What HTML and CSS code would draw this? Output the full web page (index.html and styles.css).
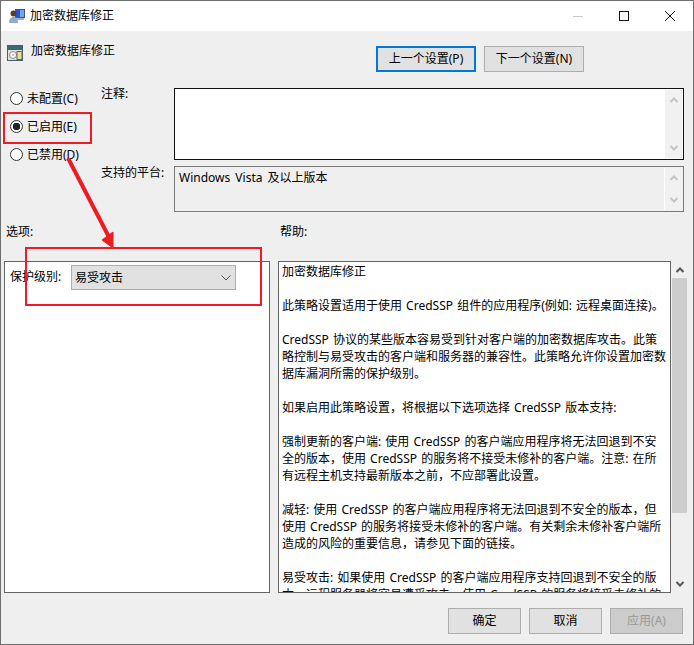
FILE: index.html
```html
<!DOCTYPE html>
<html lang="zh-CN">
<head>
<meta charset="utf-8">
<title>加密数据库修正</title>
<link rel="stylesheet" href="styles.css">
</head>
<body>
<div class="window">
  <div class="titlebar">
    <svg class="title-icon" width="16" height="16" viewBox="0 0 16 16">
      <rect x="6" y="1" width="10" height="9" fill="#44566e"/>
      <rect x="7" y="2" width="8" height="7" fill="#1f57d8"/>
      <path d="M11 2h4v7h-4z" fill="#6fa6ee"/>
      <rect x="8" y="10" width="7" height="2" fill="#a9b0ba"/>
      <circle cx="4.500" cy="5.500" r="3" fill="#5a3c28"/>
      <path d="M0 15c0-4 2-6 4.500-6S9 11 9 15z" fill="#8fa9d0"/>
    </svg>
    <span class="title-text">加密数据库修正</span>
    <div class="caption">
      <svg width="46" height="30" viewBox="0 0 46 30"><path d="M18 15.500h10" stroke="#c8c8c8" fill="none"/></svg>
      <svg width="46" height="30" viewBox="0 0 46 30"><rect x="18.500" y="10.500" width="9" height="9" stroke="#111" fill="none"/></svg>
      <svg width="46" height="30" viewBox="0 0 46 30"><path d="M18 10l10 10M28 10l-10 10" stroke="#111" fill="none"/></svg>
    </div>
  </div>
  <div class="body">
    <div class="head">
      <svg class="policy-icon" width="16" height="16" viewBox="0 0 16 16">
        <rect x="0.500" y="0.500" width="15" height="15" fill="#dfe3d6" stroke="#44606a"/>
        <rect x="1" y="1" width="14" height="4" fill="#3a6a72"/>
        <circle cx="6" cy="10" r="3.500" fill="#f4f4f4" stroke="#8a8f94"/>
        <circle cx="6" cy="10" r="1" fill="#b9a9d0"/>
        <rect x="10" y="6.500" width="5" height="8" fill="#e8dca0" stroke="#6a6a40"/>
      </svg>
      <span class="policy-name">加密数据库修正</span>
      <div class="nav">
        <button class="btn btn-nav btn-focus" type="button">上一个设置(P)</button>
        <button class="btn btn-nav" type="button">下一个设置(N)</button>
      </div>
    </div>
    <div class="config">
      <div class="radios">
        <label class="radio"><span class="dot"></span>未配置(C)</label>
        <label class="radio"><span class="dot dot-on"></span>已启用(E)</label>
        <label class="radio"><span class="dot"></span>已禁用(D)</label>
      </div>
      <div class="fields">
        <div class="field field-note">
          <span class="field-label">注释:</span>
          <div class="box box-note">
            <div class="mini-scroll">
              <svg width="10" height="8" viewBox="0 0 10 8"><path d="M1.500 6L5 2.500 8.500 6" stroke="#c4c4c4" stroke-width="2" fill="none"/></svg>
              <svg width="10" height="8" viewBox="0 0 10 8"><path d="M1.500 2L5 5.500 8.500 2" stroke="#c4c4c4" stroke-width="2" fill="none"/></svg>
            </div>
          </div>
        </div>
        <div class="field field-platform">
          <span class="field-label">支持的平台:</span>
          <div class="box box-platform">
            <span class="platform-text">Windows Vista 及以上版本</span>
            <div class="mini-scroll mini-scroll-platform">
              <svg width="10" height="8" viewBox="0 0 10 8"><path d="M1.500 6L5 2.500 8.500 6" stroke="#c4c4c4" stroke-width="2" fill="none"/></svg>
              <svg width="10" height="8" viewBox="0 0 10 8"><path d="M1.500 2L5 5.500 8.500 2" stroke="#c4c4c4" stroke-width="2" fill="none"/></svg>
            </div>
          </div>
        </div>
      </div>
    </div>
    <div class="panes">
      <div class="pane pane-options">
        <div class="pane-label">选项:</div>
        <div class="options-box">
          <span class="option-label">保护级别:</span>
          <div class="select">
            <span>易受攻击</span>
            <svg width="10" height="6" viewBox="0 0 10 6"><path d="M0.500 0.500L5 5 9.500 0.500" stroke="#555" fill="none"/></svg>
          </div>
        </div>
      </div>
      <div class="pane pane-help">
        <div class="pane-label">帮助:</div>
        <div class="help-row">
          <div class="help-box">
            <p>加密数据库修正</p>
            <p>此策略设置适用于使用 CredSSP 组件的应用程序(例如: 远程桌面连接)。</p>
            <p>CredSSP 协议的某些版本容易受到针对客户端的加密数据库攻击。此策<br>略控制与易受攻击的客户端和服务器的兼容性。此策略允许你设置加密数<br>据库漏洞所需的保护级别。</p>
            <p>如果启用此策略设置，将根据以下选项选择 CredSSP 版本支持:</p>
            <p>强制更新的客户端: 使用 CredSSP 的客户端应用程序将无法回退到不安<br>全的版本，使用 CredSSP 的服务将不接受未修补的客户端。注意: 在所<br>有远程主机支持最新版本之前，不应部署此设置。</p>
            <p>减轻: 使用 CredSSP 的客户端应用程序将无法回退到不安全的版本，但<br>使用 CredSSP 的服务将接受未修补的客户端。有关剩余未修补客户端所<br>造成的风险的重要信息，请参见下面的链接。</p>
            <p>易受攻击: 如果使用 CredSSP 的客户端应用程序支持回退到不安全的版<br>本，远程服务器将容易遭受攻击。使用 CredSSP 的服务将接受未修补的</p>
          </div>
          <div class="scrollbar">
            <svg class="arrow" width="10" height="8" viewBox="0 0 10 8"><path d="M1.500 6L5 2.500 8.500 6" stroke="#555" stroke-width="2" fill="none"/></svg>
            <div class="track"><div class="thumb"></div></div>
            <svg class="arrow" width="10" height="8" viewBox="0 0 10 8"><path d="M1.500 2L5 5.500 8.500 2" stroke="#555" stroke-width="2" fill="none"/></svg>
          </div>
        </div>
      </div>
    </div>
    <div class="footer">
      <button class="btn btn-foot" type="button">确定</button>
      <button class="btn btn-foot" type="button">取消</button>
      <button class="btn btn-foot btn-disabled" type="button">应用(A)</button>
    </div>
  </div>
  <div class="mark mark-radio"></div>
  <div class="mark mark-select"></div>
  <svg class="mark-arrow" width="60" height="100" viewBox="0 0 60 100">
    <path d="M5 0L47 81" stroke="#ed1c24" stroke-width="4" fill="none"/>
    <path d="M50 90L39 82 50 74z" fill="#ed1c24" stroke="#ed1c24" stroke-width="1"/>
  </svg>
</div>
</body>
</html>
```
FILE: styles.css
```css
* { box-sizing: border-box; }
html, body { margin: 0; padding: 0; }
body {
  font-family: "Noto Sans", "Noto Sans CJK SC", sans-serif;
  font-size: 12px;
  line-height: 17px;
  color: #000;
  background: #efefef;
}
p { margin: 0 0 17px; white-space: nowrap; word-spacing: 1px; }
.window {
  position: relative;
  width: 694px;
  height: 645px;
  border: 1px solid #6e6e6e;
  background: #efefef;
  display: flex;
  flex-direction: column;
}
.titlebar {
  height: 30px;
  background: #fff;
  display: flex;
  align-items: center;
  padding-left: 8px;
  flex: none;
}
.title-icon { margin-right: 5px; }
.title-text { padding-bottom: 2px; }
.caption { margin-left: auto; display: flex; }
.caption svg { display: block; }
.body { flex: 1; display: flex; flex-direction: column; min-height: 0; }
.head { height: 57px; display: flex; padding: 12px 0 0 6px; flex: none; }
.policy-icon { margin: 2px 8px 0 0; }
.policy-name { line-height: 15px; }
.nav { margin-left: auto; display: flex; gap: 8px; padding-right: 109px; margin-top: 3px; align-items: flex-start; }
.btn {
  font: inherit;
  color: #000;
  background: #e1e1e1;
  border: 1px solid #adadad;
  padding: 0 0 1px;
  height: 26px;
}
.btn-nav { width: 100px; }
.btn-focus { border: 2px solid #0078d7; }
.btn-foot { width: 73px; }
.btn-disabled { background: #ccc; color: #9a9a9a; }
.config { display: flex; height: 135px; flex: none; }
.radios { width: 100px; flex: none; padding: 2px 0 0 9px; display: flex; flex-direction: column; gap: 11px; }
.radio { display: flex; align-items: center; gap: 4px; height: 17px; }
.dot {
  width: 13px;
  height: 13px;
  border-radius: 50%;
  border: 1px solid #333;
  background: #fff;
  flex: none;
  display: block;
}
.dot-on { background: radial-gradient(circle, #222 0 3.500px, #fff 4px); }
.fields { flex: 1; display: flex; flex-direction: column; gap: 6px; padding-right: 9px; }
.field { display: flex; }
.field-label { width: 73px; flex: none; line-height: 12px; }
.field-platform .field-label { line-height: 14px; }
.box { flex: 1; position: relative; display: flex; }
.box-note { height: 72px; background: #fff; border: 1px solid #111; padding: 1px; justify-content: flex-end; }
.box-platform { height: 46px; border: 1px solid #7a7a7a; padding: 1px 1px 1px 4px; justify-content: space-between; }
.platform-text { padding-top: 1px; word-spacing: 2px; }
.mini-scroll {
  width: 17px;
  background: #f1f1f1;
  display: flex;
  flex-direction: column;
  align-items: center;
  justify-content: space-between;
  padding: 6px 0;
}
.mini-scroll-platform { border-left: 1px solid #fff; width: 18px; }
.panes { display: flex; flex: 1; min-height: 0; padding-left: 3px; }
.pane { display: flex; flex-direction: column; }
.pane-options { width: 274px; flex: none; }
.pane-help { flex: 1; min-width: 0; }
.pane-label { height: 38px; padding-left: 2px; flex: none; }
.options-box {
  width: 266px;
  height: 332px;
  background: #fff;
  border: 1px solid #646464;
  display: flex;
  align-items: flex-start;
  padding: 3px 0 0 5px;
}
.option-label { margin-top: 3px; width: 61px; flex: none; }
.select {
  width: 165px;
  height: 25px;
  background: #e1e1e1;
  border: 1px solid #adadad;
  display: flex;
  align-items: center;
  justify-content: space-between;
  padding: 0 4px 0 3px;
}
.help-row { display: flex; height: 332px; }
.help-box {
  width: 393px;
  background: #fff;
  border: 1px solid #646464;
  padding: 1px 0 0 3px;
  overflow: hidden;
}
.scrollbar {
  width: 17px;
  background: #efefef;
  display: flex;
  flex-direction: column;
  align-items: center;
  padding: 5px 0;
}
.arrow { flex: none; }
.track { flex: 1; width: 100%; padding: 4px 1px 67px; }
.thumb { height: 100%; background: #cdcdcd; }
.footer { height: 51px; flex: none; display: flex; justify-content: flex-end; gap: 8px; padding: 15px 10px 0 0; }
.mark { position: absolute; border: 2px solid #ed1c24; }
.mark-radio { left: 2px; top: 111px; width: 89px; height: 32px; }
.mark-select { left: 24px; top: 246px; width: 237px; height: 59px; }
.mark-arrow { position: absolute; left: 62px; top: 157px; }
```
